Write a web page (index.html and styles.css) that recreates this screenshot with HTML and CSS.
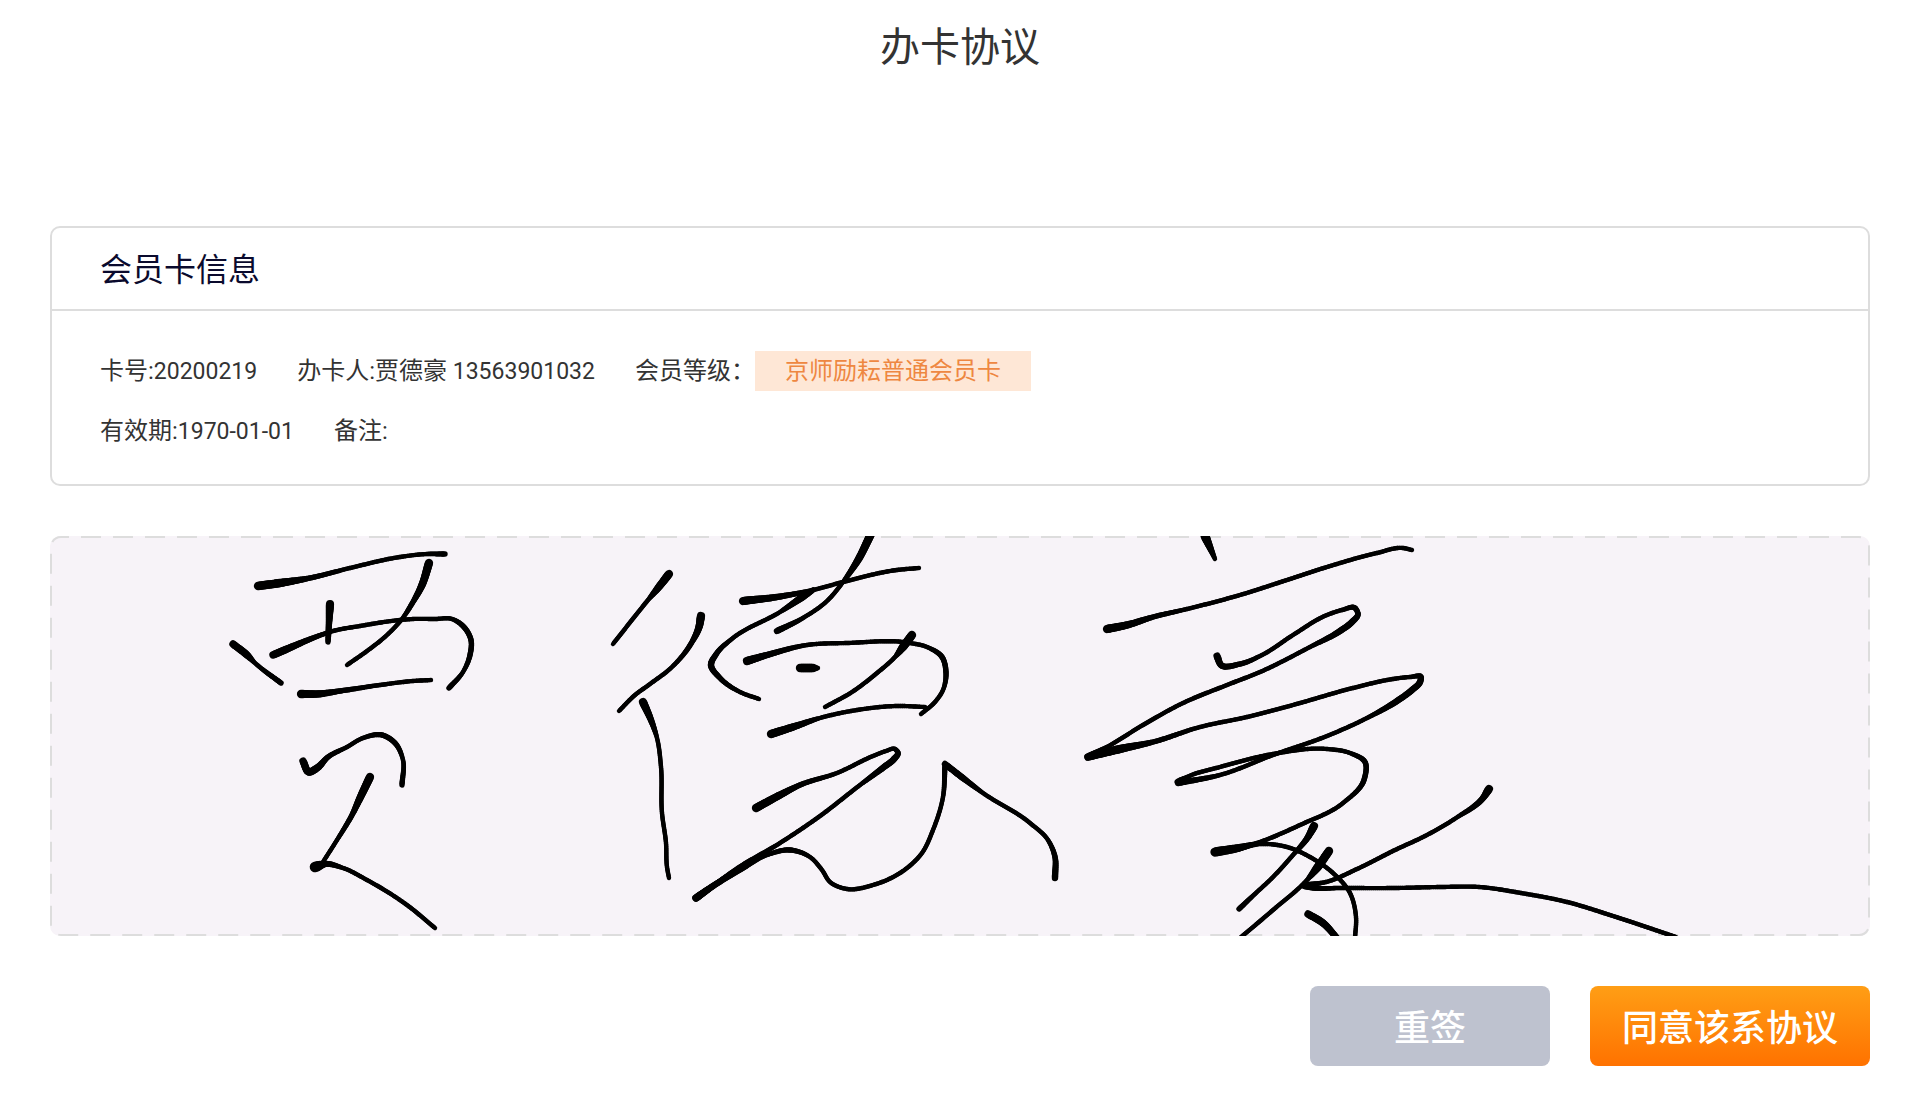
FILE: index.html
```html
<!DOCTYPE html>
<html lang="zh-CN">
<head>
    <title>办卡协议</title>
    <meta charset="UTF-8">
    <meta name="viewport" content="width=device-width, initial-scale=1.0">
    <link rel="stylesheet" href="styles.css">
</head>
<body>
    <h1 class="title">办卡协议</h1>

    <section class="card">
        <h2 class="card-title">会员卡信息</h2>
        <div class="card-body">
            <div class="row">
                <span>卡号:<span class="num">20200219</span></span>
                <span>办卡人:贾德豪<span class="num"> 13563901032</span></span>
                <span class="level">会员等级：<span class="tag">京师励耘普通会员卡</span></span>
            </div>
            <div class="row">
                <span>有效期:<span class="num">1970-01-01</span></span>
                <span>备注:</span>
            </div>
        </div>
    </section>

    <div class="pad">
        <svg class="pad-border" aria-hidden="true"><rect x="1" y="1" rx="10"/></svg>
        <canvas class="pad-canvas" id="sign" aria-label="签名"></canvas>
    </div>

    <div class="actions">
        <button type="button" class="btn btn-reset" id="reset">重签</button>
        <button type="button" class="btn btn-agree">同意该系协议</button>
    </div>

    <script src="sign.js"></script>
</body>
</html>
```

FILE: styles.css
```css
* {
    box-sizing: border-box;
}
body {
    margin: 0;
    padding: 0 50px 50px;
    background: #fff;
    color: #333;
    font-family: Roboto, "Noto Sans CJK SC", sans-serif;
    font-size: 24px;
}
.title {
    margin: 0;
    padding: 14px 0;
    font-size: 40px;
    font-weight: 400;
    line-height: 60px;
    text-align: center;
}
.title, .card-title, .btn {
    font-family: "Noto Sans CJK SC", sans-serif;
}
.card {
    margin-top: 138px;
    border: 2px solid #ddd;
    border-radius: 10px;
}
.card-title {
    margin: 0;
    padding: 14px 48px 17px;
    border-bottom: 2px solid #ddd;
    color: #0a0a2d;
    font-size: 32px;
    font-weight: 400;
    line-height: 50px;
}
.card-body {
    display: flex;
    flex-direction: column;
    gap: 20px;
    padding: 40px 48px 33px;
}
.row {
    display: flex;
    flex-wrap: wrap;
    gap: 0 40px;
    line-height: 40px;
}
.num {
    font-size: 23px;
    line-height: 1;
}
.level {
    display: flex;
}
.tag {
    padding: 0 30px;
    background: #fee7d6;
    color: #ee8741;
}
.pad {
    position: relative;
    height: 400px;
    margin-top: 50px;
    border-radius: 10px;
    background: #f7f3f8;
}
.pad-border {
    display: block;
    width: 100%;
    height: 100%;
}
.pad-border rect {
    width: calc(100% - 2px);
    height: calc(100% - 2px);
    fill: none;
    stroke: #ddd;
    stroke-width: 2px;
    stroke-dasharray: 20 12;
    stroke-dashoffset: 12px;
}
.pad-canvas {
    position: absolute;
    top: 0;
    left: 0;
    width: 100%;
    height: 100%;
}
.actions {
    display: flex;
    justify-content: flex-end;
    gap: 40px;
    margin-top: 50px;
}
.btn {
    height: 80px;
    padding: 0 0 2px;
    border: none;
    border-radius: 8px;
    color: #fff;
    font-size: 36px;
    font-weight: 500;
    cursor: pointer;
}
.btn-reset {
    width: 240px;
    background: #bec2cf;
}
.btn-agree {
    width: 280px;
    background: linear-gradient(#ff9e15, #ff7200);
}
```

FILE: sign.js
```js
// each stroke is a list of [x, y, pen width]
const strokes = [
    // 贾
    [[208,50,8],[230,47,8],[260,42,5],[300,32,4],[350,21,4],[377,18,4],[395,18,5]],
    [[379,27,8],[372,49,7],[363,66,5],[352,83,4],[337,99,4],[317,115,4],[297,129,4]],
    [[280,68,8],[279,87,6],[278,106,5]],
    [[223,119,7],[237,113,7],[263,102,5],[283,95,4],[310,90,4],[350,84,4],[363,83,4],[385,83,4],[402,83,4],[413,90,5],[421,104,5],[420,119,5],[413,136,4],[399,152,5]],
    [[183,108,7],[197,119,7],[205,127,4],[231,147,5]],
    [[251,158,8],[267,158,7],[290,155,5],[330,149,4],[363,145,4],[381,144,4]],
    [[253,225,7],[259,236,7],[267,232,7],[278,221,5],[297,211,4],[313,202,4],[332,199,5],[345,207,5],[353,224,4],[352,249,5]],
    [[320,241,8],[310,262,7],[302,279,5],[287,304,4],[273,326,4]],
    [[265,331,11],[275,328,6],[293,332,4],[317,344,4],[357,369,4],[385,392,4]],
    // 德
    [[619,38,8],[608,52,7],[598,64,4],[563,108,4]],
    [[651,80,8],[649,91,7],[642,106,5],[622,131,4],[600,148,4],[585,159,4],[569,175,4]],
    [[593,166,8],[601,184,6],[607,202,4],[611,231,4],[612,277,4],[616,307,4],[617,331,4],[619,342,4]],
    [[693,65,8],[727,61,6],[763,54,4],[793,46,4],[847,34,4],[869,32,4]],
    [[821,-2,8],[808,24,7],[793,46,4],[777,65,4],[753,82,4],[727,95,6]],
    [[763,54,5],[751,62,7],[730,76,4],[683,102,4],[667,117,5],[661,129,6],[670,142,5],[690,156,4],[709,163,4]],
    [[697,125,8],[717,119,6],[757,109,4],[797,107,4],[860,107,4],[877,111,4],[892,121,5],[896,137,5],[893,154,4],[885,166,4],[871,178,4]],
    [[750,132,8],[763,132,8],[768,132,4]],
    [[862,99,8],[853,111,8],[845,121,4],[827,137,4],[802,156,4],[775,171,4]],
    [[721,198,8],[743,191,7],[770,182,4],[807,174,4],[847,170,4],[875,171,4]],
    [[706,272,8],[730,259,7],[750,249,5],[787,237,4],[823,220,4],[836,215,4],[845,213,4],[848,217,5],[844,223,6],[834,231,6],[810,249,4],[770,280,4],[730,307,4],[690,331,5],[663,350,5],[646,362,7]],
    [[646,362,7],[663,350,6],[690,334,5],[717,319,4],[740,314,5],[760,321,4],[772,334,4],[780,346,4],[797,353,4],[823,349,4],[853,335,4],[872,317,4],[883,294,4],[893,261,4],[895,229,5]],
    [[895,228,6],[913,242,6],[933,257,4],[980,287,4],[998,304,4],[1005,321,5],[1005,342,6]],
    // 豪
    [[1155,0,9],[1165,23,4]],
    [[1057,93,8],[1077,89,7],[1103,81,5],[1137,73,4],[1190,59,4],[1237,44,4],[1277,31,4],[1327,17,4],[1353,12,4],[1362,14,4]],
    [[1167,120,7],[1171,129,6],[1190,128,5],[1212,119,4],[1243,99,4],[1277,79,4],[1292,74,4],[1305,72,5],[1308,78,5],[1302,86,6],[1290,95,6],[1260,111,4],[1210,136,4],[1177,149,4],[1133,167,4],[1093,189,4],[1057,211,4],[1038,221,7]],
    [[1038,221,7],[1070,213,8],[1103,206,5],[1150,191,4],[1197,181,4],[1243,169,4],[1303,152,4],[1343,143,4],[1360,141,4],[1371,141,5],[1370,146,6],[1362,154,6],[1347,165,6],[1317,182,4],[1277,200,4],[1223,219,4],[1170,239,4],[1128,247,6]],
    [[1128,246,7],[1137,241,4],[1170,231,4],[1223,218,4],[1277,213,4],[1300,217,4],[1315,226,5],[1314,244,5],[1293,267,4],[1250,289,4],[1207,307,4],[1187,313,6]],
    [[1165,316,9],[1183,313,8],[1210,308,4],[1237,311,4],[1260,321,4],[1283,337,4],[1300,357,4],[1306,381,4],[1305,402,4]],
    [[1264,290,8],[1258,301,6],[1243,319,4],[1220,344,4],[1207,356,4],[1189,373,5]],
    [[1279,315,8],[1267,332,8],[1257,344,4],[1223,374,4],[1190,402,4]],
    [[1258,378,7],[1273,387,7],[1287,402,6]],
    [[1439,253,8],[1433,262,6],[1406,282,4],[1375,300,4],[1345,314,4],[1307,333,4],[1276,346,4],[1254,349,5]],
    [[1254,350,6],[1264,352,5],[1290,352,4],[1345,352,4],[1391,351,4],[1429,351,4],[1471,357,4],[1517,366,4],[1563,380,4],[1626,401,4]]
];

const canvas = document.getElementById('sign');
const ctx = canvas.getContext('2d');

function dist(p, q) {
    return Math.hypot(q[0] - p[0], q[1] - p[1]) || 1;
}

// direction of the curve at point b, weighted by the distance to its neighbours
function slope(a, b, c, axis) {
    const d1 = dist(a, b);
    const d2 = dist(b, c);
    if (a === b) return (c[axis] - b[axis]) / d2;
    if (b === c) return (b[axis] - a[axis]) / d1;
    return ((b[axis] - a[axis]) / d1 * d2 + (c[axis] - b[axis]) / d2 * d1) / (d1 + d2);
}

// smooth curve from b to c, t from 0 to 1
function curve(a, b, c, d, t, axis) {
    const len = dist(b, c);
    const m1 = slope(a, b, c, axis) * len;
    const m2 = slope(b, c, d, axis) * len;
    const t2 = t * t;
    const t3 = t2 * t;
    return (2 * t3 - 3 * t2 + 1) * b[axis] + (t3 - 2 * t2 + t) * m1
        + (3 * t2 - 2 * t3) * c[axis] + (t3 - t2) * m2;
}

function drawStroke(points) {
    let last = points[0];
    for (let i = 0; i < points.length - 1; i++) {
        const b = points[i];
        const c = points[i + 1];
        const a = points[i - 1] || b;
        const d = points[i + 2] || c;
        const steps = Math.ceil(dist(b, c) / 2);
        for (let s = 1; s <= steps; s++) {
            const t = s / steps;
            const x = curve(a, b, c, d, t, 0);
            const y = curve(a, b, c, d, t, 1);
            ctx.lineWidth = b[2] + (c[2] - b[2]) * t + 0.4;
            ctx.beginPath();
            ctx.moveTo(last[0], last[1]);
            ctx.lineTo(x, y);
            ctx.stroke();
            last = [x, y];
        }
    }
}

function draw() {
    canvas.width = canvas.clientWidth;
    canvas.height = canvas.clientHeight;
    ctx.lineCap = 'round';
    ctx.strokeStyle = '#000';
    strokes.forEach(drawStroke);
}

document.getElementById('reset').addEventListener('click', function () {
    strokes.length = 0;
    draw();
});
window.addEventListener('resize', draw);
draw();
```
